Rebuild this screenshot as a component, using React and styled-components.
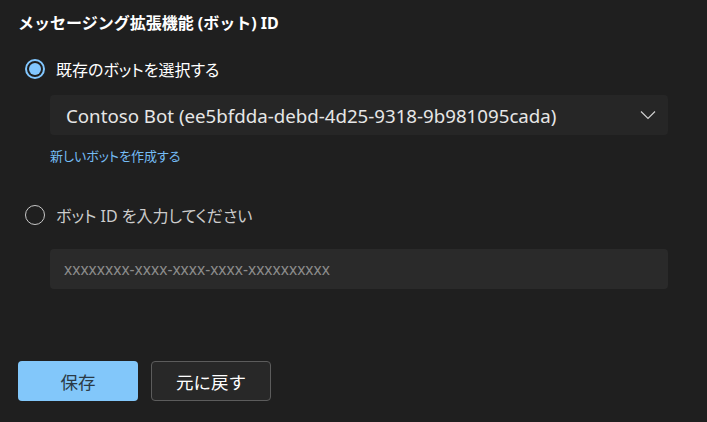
import React, { useState } from "react";
import { createGlobalStyle, styled } from "styled-components";

const GlobalStyle = createGlobalStyle`
  * {
    margin: 0;
    padding: 0;
    box-sizing: border-box;
  }
  body {
    background-color: #1f1f1f;
    font-family: "Noto Sans", "Noto Sans CJK JP", sans-serif;
  }
`;

const Page = styled.div`
  width: 707px;
  height: 422px;
  background-color: #1f1f1f;
  color: #ffffff;
  padding: 12px 18px 0 18px;
  display: flex;
  flex-direction: column;
  overflow: hidden;
`;

const Title = styled.h2`
  font-size: 16px;
  font-weight: 700;
  line-height: 22px;
  color: #ffffff;
`;

const Option = styled.label`
  display: flex;
  align-items: center;
  gap: 11px;
  margin-top: ${(p) => p.$top}px;
  padding-left: 7px;
  height: 24px;
  font-size: 16px;
  font-feature-settings: "palt";
  color: ${(p) => (p.$checked ? "#ffffff" : "#cccccc")};
  cursor: pointer;
`;

const Radio = styled.span`
  width: 20px;
  height: 20px;
  border-radius: 50%;
  border: ${(p) => (p.$checked ? "2px solid #82c7ff" : "1px solid #c8c8c8")};
  display: flex;
  align-items: center;
  justify-content: center;
  flex-shrink: 0;

  &::after {
    content: "";
    width: 12px;
    height: 12px;
    border-radius: 50%;
    background-color: #82c7ff;
    display: ${(p) => (p.$checked ? "block" : "none")};
  }
`;

const Indent = styled.div`
  padding-left: 32px;
  width: 650px;
`;

const Select = styled.div`
  margin-top: 14px;
  height: 40px;
  background-color: #262626;
  border-radius: 4px;
  display: flex;
  align-items: center;
  justify-content: space-between;
  padding: 0 12px 0 16px;
  font-size: 18.7px;
  color: #e6e6e6;
`;

const Link = styled.a`
  display: inline-block;
  margin-top: 11px;
  font-size: 13px;
  font-feature-settings: "palt";
  color: #75bcf5;
  text-decoration: none;
  cursor: pointer;
`;

const Input = styled.input`
  margin-top: 22px;
  width: 100%;
  height: 40px;
  background-color: #2a2a2a;
  border: none;
  border-radius: 4px;
  padding: 0 14px;
  font-family: inherit;
  font-size: 15.5px;
  color: #e6e6e6;
  outline: none;

  &::placeholder {
    color: #8c8c8c;
  }
`;

const Actions = styled.div`
  margin-top: 72px;
  display: flex;
  gap: 13px;
`;

const Button = styled.button`
  width: 120px;
  height: 40px;
  border-radius: 4px;
  font-family: inherit;
  font-size: 17.5px;
  cursor: pointer;
  background-color: ${(p) => (p.$primary ? "#82c7fa" : "#282828")};
  color: ${(p) => (p.$primary ? "#2b3a45" : "#ffffff")};
  border: ${(p) => (p.$primary ? "none" : "1px solid #5c5c5c")};
`;

const Chevron = () => (
  <svg width="16" height="16" viewBox="0 0 16 16" fill="none">
    <path d="M1 4.5 L8 11.5 L15 4.5" stroke="#cfcfcf" strokeWidth="1.2" />
  </svg>
);

export default function App() {
  const [mode, setMode] = useState("existing");

  return (
    <>
      <GlobalStyle />
      <Page>
        <Title>メッセージング拡張機能 (ボット) ID</Title>

        <Option $top={23} $checked={mode === "existing"} onClick={() => setMode("existing")}>
          <Radio $checked={mode === "existing"} />
          既存のボットを選択する
        </Option>
        <Indent>
          <Select>
            <span>Contoso Bot (ee5bfdda-debd-4d25-9318-9b981095cada)</span>
            <Chevron />
          </Select>
          <Link>新しいボットを作成する</Link>
        </Indent>

        <Option $top={37} $checked={mode === "manual"} onClick={() => setMode("manual")}>
          <Radio $checked={mode === "manual"} />
          ボット ID を入力してください
        </Option>
        <Indent>
          <Input placeholder="xxxxxxxx-xxxx-xxxx-xxxx-xxxxxxxxxx" />
        </Indent>

        <Actions>
          <Button $primary>保存</Button>
          <Button>元に戻す</Button>
        </Actions>
      </Page>
    </>
  );
}
